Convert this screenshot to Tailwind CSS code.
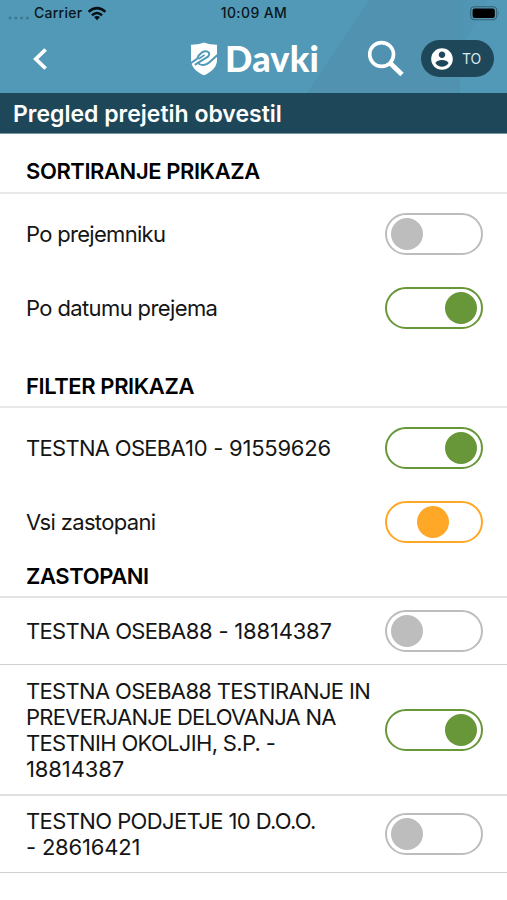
<!DOCTYPE html>
<html lang="sl">
<head>
    <meta charset="UTF-8">
    <meta name="viewport" content="width=device-width, initial-scale=1.0">
    <title>eDavki - Pregled prejetih obvestil</title>
    <script src="https://cdn.jsdelivr.net/npm/@tailwindcss/browser@4"></script>
</head>
<body class="bg-white text-[#151515] font-['Inter',sans-serif] text-[22px] leading-[26.2px] h-[900px] overflow-hidden">

    <!-- Header -->
    <header class="relative h-[93px] bg-[#5199b7] overflow-hidden">
        <svg class="absolute inset-0" width="507" height="93" viewBox="0 0 507 93">
            <path d="M369 0H460V93H307Z" fill="#5092b0"/>
            <path d="M460 0H488L460 50Z" fill="#5095b3"/>
        </svg>

        <!-- Status bar -->
        <div class="relative grid grid-cols-3 items-center h-[26px] pl-2 pr-[7px] text-[14px] leading-[16px] font-medium text-[#0b1519]">
            <div class="flex items-center">
                <svg width="22" height="4" viewBox="0 0 22 4" class="mt-[9px] mr-[4px]" fill="#3f7890">
                    <circle cx="2" cy="2" r="1.5"/><circle cx="7.8" cy="2" r="1.5"/><circle cx="13.6" cy="2" r="1.5"/><circle cx="19.4" cy="2" r="1.5"/>
                </svg>
                <span class="tracking-[0.25px]">Carrier</span>
                <svg width="20" height="15" viewBox="0 0 20 15" class="ml-[5px]" fill="none" stroke="#061014" stroke-width="2.6">
                    <path d="M1.6 5.9Q10 -1.6 18.4 5.9"/>
                    <path d="M4.9 9.2Q10 4.8 15.1 9.2"/>
                    <path d="M10 14.2L7 11.1Q10 8.7 13 11.1Z" fill="#061014" stroke="none"/>
                </svg>
            </div>
            <span class="text-center tracking-[0.4px]">10:09 AM</span>
            <svg width="30" height="15" viewBox="0 0 30 15" class="justify-self-end">
                <rect x=".7" y=".7" width="26" height="13" rx="3.6" fill="none" stroke="#356274" stroke-width="1.1"/>
                <rect x="2.6" y="2.6" width="22.2" height="9.4" rx="2" fill="#000"/>
                <path d="M28 5.2Q29.6 7.2 28 9.2Z" fill="#356274"/>
            </svg>
        </div>

        <!-- Navigation -->
        <div class="relative flex items-center h-[65px] pl-[32px] pr-[13px]">
            <svg width="17" height="22" viewBox="0 0 17 22" fill="none" stroke="#fff" stroke-width="3.8">
                <path d="M13.6 1.5L3.8 11L13.6 20.5"/>
            </svg>
            <div class="flex items-center ml-[141px]">
                <svg width="28" height="34" viewBox="0 0 28 34">
                    <path d="M1 2.8C5.5 2.8 10 2 14 .6C18 2 22.5 2.8 27 2.8V18C27 25.5 20.5 30.5 14 33.3C7.5 30.5 1 25.5 1 18Z" fill="#fff"/>
                    <g fill="none" stroke="#5199b7" stroke-width="2">
                        <path d="M0 21.6L7.4 16.6C9 11.2 14 8.4 17.4 9.6C20.2 10.8 19.6 13.6 16.8 15.4L8 20.8"/>
                        <path d="M4.8 22.8L8 20.8C10.5 24.4 16 23.4 19.5 20.2L28 12.6"/>
                        <path d="M8.6 17L14.6 12.9" stroke-width="1.6"/>
                    </g>
                </svg>
                <span class="ml-[7px] mb-[2px] font-['Lato',sans-serif] font-black text-[36px] leading-[40px] text-white tracking-[0.2px]">Davki</span>
            </div>
            <svg width="38" height="38" viewBox="0 0 38 38" class="ml-auto mr-[16px]" fill="none" stroke="#fff">
                <circle cx="14.6" cy="14.5" r="11.9" stroke-width="3.6"/>
                <path d="M23 23L35 34.6" stroke-width="4.8"/>
            </svg>
            <div class="flex items-center w-[73px] h-[37px] rounded-full bg-[#1f475a] pl-[8px] text-white">
                <svg width="26" height="26" viewBox="0 0 24 24" fill="#fff">
                    <path d="M12 2C6.48 2 2 6.48 2 12s4.48 10 10 10 10-4.48 10-10S17.52 2 12 2zm0 3c1.66 0 3 1.34 3 3s-1.34 3-3 3-3-1.34-3-3 1.34-3 3-3zm0 14.2c-2.5 0-4.71-1.28-6-3.22.03-1.99 4-3.08 6-3.08 1.99 0 5.97 1.09 6 3.08-1.29 1.94-3.5 3.22-6 3.22z"/>
                </svg>
                <span class="ml-[7px] text-[14px] leading-[18px] text-[#dbe7ec]">TO</span>
            </div>
        </div>
    </header>

    <!-- Page title -->
    <h1 class="h-[41px] bg-[#1f475a] border-b border-[#7796a4] pl-[13px] text-[23px] leading-[42px] font-semibold text-white"><span>Pregled prejetih obvestil</span></h1>

    <main>
        <!-- Sorting -->
        <h2 class="h-[60px] pl-[26px] pt-[24px] font-semibold tracking-[-0.42px] text-black border-b-2 border-[#e8e8e8]"><span>SORTIRANJE PRIKAZA</span></h2>
        <div class="flex items-center justify-between h-[74px] mt-[3px] pl-[26px] pr-[24px]">
            <span class="tracking-[-0.7px]">Po prejemniku</span>
            <div class="flex items-center w-[98px] h-[42px] rounded-full border-2 border-[#bdbdbd] px-[4px]">
                <div class="size-8 rounded-full bg-[#bdbdbd]"></div>
            </div>
        </div>
        <div class="flex items-center justify-between h-[74px] pl-[26px] pr-[24px]">
            <span class="tracking-[-0.62px]">Po datumu prejema</span>
            <div class="flex items-center justify-end w-[98px] h-[42px] rounded-full border-2 border-[#689739] px-[4px]">
                <div class="size-8 rounded-full bg-[#689739]"></div>
            </div>
        </div>

        <!-- Filter -->
        <h2 class="h-[63px] pl-[26px] pt-[28px] font-semibold tracking-[-0.4px] text-black border-b-2 border-[#e8e8e8]"><span>FILTER PRIKAZA</span></h2>
        <div class="flex items-center justify-between h-[74px] mt-[3px] pl-[26px] pr-[24px]">
            <span><span class="tracking-[-0.7px]">TESTNA OSEBA</span><span class="tracking-[-0.25px]">10 - 91559626</span></span>
            <div class="flex items-center justify-end w-[98px] h-[42px] rounded-full border-2 border-[#689739] px-[4px]">
                <div class="size-8 rounded-full bg-[#689739]"></div>
            </div>
        </div>
        <div class="flex items-center justify-between h-[74px] pl-[26px] pr-[24px]">
            <span class="tracking-[-0.65px]">Vsi zastopani</span>
            <div class="flex items-center justify-center w-[98px] h-[42px] rounded-full border-2 border-[#ffa726] pl-[4px] pr-[6px]">
                <div class="size-8 rounded-full bg-[#ffa726]"></div>
            </div>
        </div>

        <!-- Represented persons -->
        <h2 class="h-[39px] pl-[26px] pt-[4px] font-semibold tracking-[-0.4px] text-black border-b-2 border-[#e4e4e4]"><span>ZASTOPANI</span></h2>
        <div class="flex items-center justify-between h-[67px] pl-[26px] pr-[24px] border-b border-[#cfcfcf]">
            <span><span class="tracking-[-0.65px]">TESTNA OSEBA</span><span class="tracking-[-0.2px]">88 - 18814387</span></span>
            <div class="flex items-center w-[98px] h-[42px] rounded-full border-2 border-[#bdbdbd] px-[4px]">
                <div class="size-8 rounded-full bg-[#bdbdbd]"></div>
            </div>
        </div>
        <div class="flex items-center justify-between h-[131px] pl-[26px] pr-[24px] border-b-2 border-[#e0e0e0]">
            <span class="pt-px whitespace-nowrap tracking-[-0.67px]">TESTNA OSEBA88 TESTIRANJE IN<br><span class="tracking-[-0.74px]">PREVERJANJE DELOVANJA NA</span><br>TESTNIH OKOLJIH, S.P. -<br><span class="tracking-[-0.1px]">18814387</span></span>
            <div class="flex items-center justify-end w-[98px] h-[42px] shrink-0 rounded-full border-2 border-[#689739] px-[4px]">
                <div class="size-8 rounded-full bg-[#689739]"></div>
            </div>
        </div>
        <div class="flex items-center justify-between h-[77px] pl-[26px] pr-[24px] border-b border-[#cfcfcf]">
            <span class="tracking-[-0.6px]">TESTNO PODJETJE 10 D.O.O.<br><span class="tracking-[-0.2px]">- 28616421</span></span>
            <div class="flex items-center w-[98px] h-[42px] rounded-full border-2 border-[#bdbdbd] px-[4px]">
                <div class="size-8 rounded-full bg-[#bdbdbd]"></div>
            </div>
        </div>
    </main>

</body>
</html>
